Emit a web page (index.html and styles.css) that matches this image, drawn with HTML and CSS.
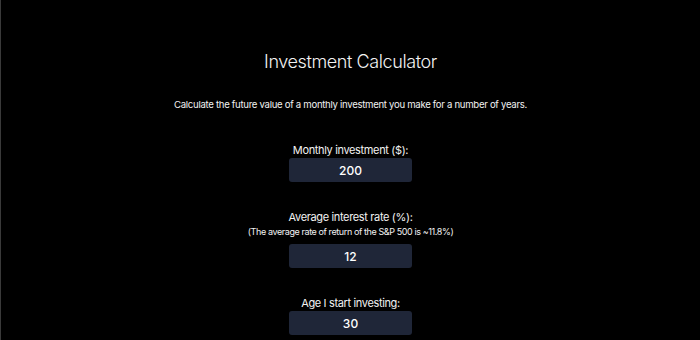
FILE: index.html
```html
<!DOCTYPE html>
<html lang="en">
<head>
    <meta charset="UTF-8">
    <title>Investment Calculator</title>
    <link rel="stylesheet" href="styles.css">
</head>
<body>
    <main class="calculadora">
        <h1 class="titulo">Investment Calculator</h1>
        <p class="descripcion">Calculate the future value of a monthly investment you make for a number of years.</p>

        <div class="campo">
            <label for="mensual">Monthly investment ($):</label>
            <input id="mensual" type="text" value="200">
        </div>

        <div class="campo">
            <label for="interes">Average interest rate (%):</label>
            <span class="nota">(The average rate of return of the S&amp;P 500 is ~11.8%)</span>
            <input id="interes" type="text" value="12">
        </div>

        <div class="campo">
            <label for="edad">Age I start investing:</label>
            <input id="edad" type="text" value="30">
        </div>
    </main>
</body>
</html>
```

FILE: styles.css
```css
/* Estilos de la calculadora */
html, body {
    margin: 0;
    background-color: #000;
}

body {
    border-left: 1px solid #3a3a3a;
    height: 340px;
    overflow: hidden;
    box-sizing: border-box;
    color: #f2f2f2;
    font-family: "Inter", "Liberation Sans", sans-serif;
}

.calculadora {
    display: flex;
    flex-direction: column;
    align-items: center;
    text-align: center;
    padding-top: 48px;
}

.titulo {
    margin: 0;
    font-size: 18px;
    font-weight: 300;
    letter-spacing: -0.4px;
    line-height: 28px;
}

.descripcion {
    margin: 22px 0 31px;
    font-size: 9.6px;
    letter-spacing: -0.3px;
    line-height: 14px;
}

.campo {
    display: flex;
    flex-direction: column;
    align-items: center;
    margin-bottom: 28px;
}

.campo label {
    font-size: 11px;
    letter-spacing: -0.35px;
    line-height: 14px;
    margin-bottom: 1px;
}

.nota {
    font-size: 9px;
    letter-spacing: -0.4px;
    line-height: 12px;
    margin: 1px 0 6px;
}

.campo input {
    width: 123px;
    height: 24px;
    box-sizing: border-box;
    border: none;
    border-radius: 3px;
    background-color: #1f2638;
    color: #fff;
    font-family: "Inter", "Liberation Sans", sans-serif;
    font-size: 12px;
    font-weight: 500;
    text-align: center;
    padding: 0;
}
```
